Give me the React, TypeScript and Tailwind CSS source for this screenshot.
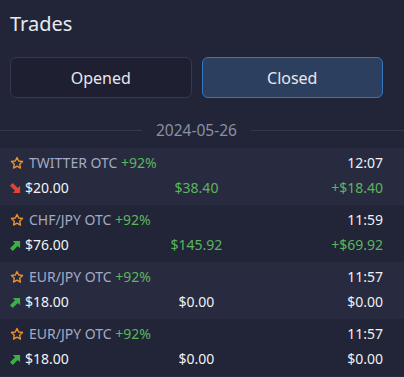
import React from "react";

type Trade = {
  name: string;
  pct: string;
  time: string;
  dir: "up" | "down";
  amount: string;
  payout: string;
  profit: string;
  win: boolean;
};

const trades: Trade[] = [
  { name: "TWITTER OTC", pct: "+92%", time: "12:07", dir: "down", amount: "$20.00", payout: "$38.40", profit: "+$18.40", win: true },
  { name: "CHF/JPY OTC", pct: "+92%", time: "11:59", dir: "up", amount: "$76.00", payout: "$145.92", profit: "+$69.92", win: true },
  { name: "EUR/JPY OTC", pct: "+92%", time: "11:57", dir: "up", amount: "$18.00", payout: "$0.00", profit: "$0.00", win: false },
  { name: "EUR/JPY OTC", pct: "+92%", time: "11:57", dir: "up", amount: "$18.00", payout: "$0.00", profit: "$0.00", win: false },
];

function Star() {
  return (
    <svg width="14" height="14" viewBox="0 0 24 24" className="shrink-0">
      <path
        d="M12 2.5l2.9 6.1 6.6.8-4.9 4.6 1.3 6.6L12 17.3l-5.9 3.3 1.3-6.6-4.9-4.6 6.6-.8z"
        fill="none"
        stroke="#e8922e"
        strokeWidth="2.4"
        strokeLinejoin="round"
      />
    </svg>
  );
}

function Arrow({ dir }: { dir: "up" | "down" }) {
  const color = dir === "up" ? "#3fae49" : "#e5432e";
  return (
    <svg width="11" height="11" viewBox="0 0 12 12" className="shrink-0">
      {dir === "up" ? (
        <polygon fill={color} points="3,1 11,1 11,9 8.5,6.5 3,12 0,9 5.5,3.5" />
      ) : (
        <polygon fill={color} points="3,11 11,11 11,3 8.5,5.5 3,0 0,3 5.5,8.5" />
      )}
    </svg>
  );
}

export default function App() {
  return (
    <div
      className="w-[404px] h-[377px] overflow-hidden bg-[#222537] text-[#e4e6ec]"
      style={{ fontFamily: '"Noto Sans", "Open Sans", sans-serif' }}
    >
      <div className="pl-[10px] pr-[21px] pt-[10px] text-[20px] leading-[28px] text-[#e8eaf0]">
        Trades
      </div>
      <div className="pl-[10px] pr-[21px] grid grid-cols-2 gap-[10px] mt-[19px]">
        <button className="h-[41px] rounded-[6px] border border-[#363949] bg-[#1e2031] text-[16px] text-[#e6e8ee]">
          Opened
        </button>
        <button className="h-[41px] rounded-[6px] border border-[#3477bd] bg-[#2d3f5e] text-[16px] text-[#e6e8ee]">
          Closed
        </button>
      </div>
      <div className="h-[50px] pt-[22px]">
        <div className="flex items-center h-[20px]">
          <div className="w-[142px] h-px bg-[#343849]" />
          <div className="px-[14px] text-[15.5px] leading-[20px] text-[#8b90a3]">2024-05-26</div>
          <div className="flex-1 h-px bg-[#343849]" />
        </div>
      </div>
      <div>
        {trades.map((t, i) => (
          <div
            key={i}
            className={`pl-[10px] pr-[21px] h-[57px] pt-[5px] flex flex-col gap-[5px] text-[14px] ${
              i % 2 === 0 ? "bg-[#282b3f]" : "bg-[#222537]"
            }`}
          >
            <div className="flex items-center justify-between leading-[20px]">
              <div className="flex items-center gap-[5px]">
                <Star />
                <span className="text-[#a3aac4]">
                  {t.name} <span className="text-[#5bb55d]">{t.pct}</span>
                </span>
              </div>
              <span className="text-[#eef0f4]">{t.time}</span>
            </div>
            <div className="grid grid-cols-3 items-center leading-[20px]">
              <div className="flex items-center gap-[4px]">
                <Arrow dir={t.dir} />
                <span className="text-[#f0f2f6]">{t.amount}</span>
              </div>
              <div className={`text-center ${t.win ? "text-[#5bb55d]" : "text-[#eef0f4]"}`}>{t.payout}</div>
              <div className={`text-right ${t.win ? "text-[#5bb55d]" : "text-[#eef0f4]"}`}>{t.profit}</div>
            </div>
          </div>
        ))}
        <div className="h-[57px] bg-[#282b3f]" />
      </div>
    </div>
  );
}
